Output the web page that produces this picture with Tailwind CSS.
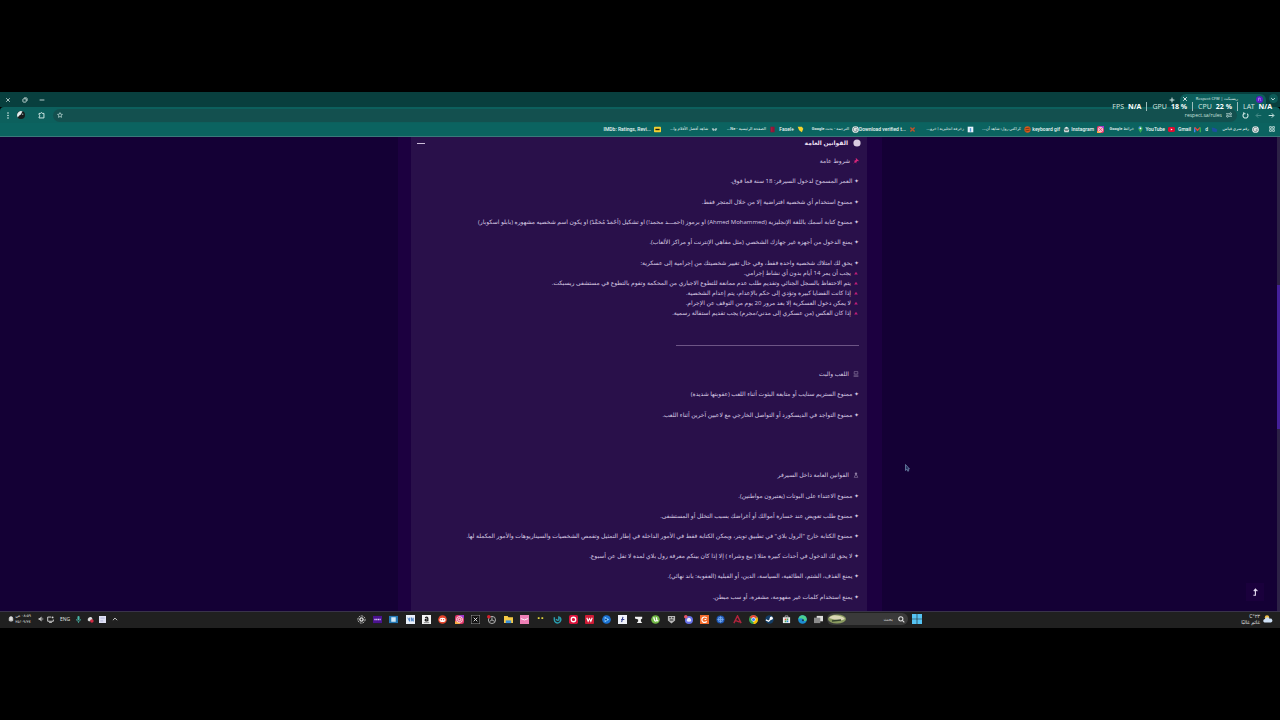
<!DOCTYPE html>
<html lang="ar" dir="rtl">
<head>
<meta charset="utf-8">
<title>ريسبكت | Respect CFW</title>
<script src="https://cdn.jsdelivr.net/npm/@tailwindcss/browser@4"></script>
</head>
<body class="bg-black min-h-screen font-['Open_Sans','DejaVu_Sans',sans-serif] text-white py-[92px] overflow-hidden">
<svg width="0" height="0" class="absolute" aria-hidden="true">
  <defs>
    <symbol id="x" viewBox="0 0 10 10"><path d="M2 2l6 6M8 2l-6 6" stroke="currentColor" stroke-width="1.4"/></symbol>
    <symbol id="arrow" viewBox="0 0 10 10"><path d="M1 5h7M5.500 2l3 3-3 3" stroke="currentColor" stroke-width="1.4" fill="none"/></symbol>
    <symbol id="globe" viewBox="0 0 10 10"><circle cx="5" cy="5" r="4.800" fill="#e4e8e8"/><path d="M7.500 3.500a3 3 0 1 0 .3 2H5.200" stroke="#6a8587" stroke-width="1.300" fill="none"/></symbol>
    <symbol id="insta" viewBox="0 0 10 10"><rect width="10" height="10" rx="2.500" fill="#e3386b"/><path d="M0 7.500V10h6C5 8 3 7 0 7z" fill="#f7a941"/><path d="M4 0h6v4C8 3 6 2 4 0z" fill="#a035c8"/><rect x="2" y="2" width="6" height="6" rx="2" fill="none" stroke="#fff"/><circle cx="5" cy="5" r="1.400" fill="none" stroke="#fff"/></symbol>
    <symbol id="tri" viewBox="0 0 10 10"><path d="M5 2l4.500 7h-9z" fill="#c01d78"/></symbol>
  </defs>
</svg>

<main class="relative flex flex-col">
  <header class="relative">
    <div class="flex h-[15px] items-end justify-between bg-[#083f3e]">
      <div class="flex h-full items-end">
        <button aria-label="البحث في علامات التبويب" class="flex h-[13px] w-[14px] items-start justify-center"><span class="flex size-[9px] items-center justify-center rounded-full bg-[#0d5b58]"><svg class="size-[6px]" viewBox="0 0 10 10"><path d="M2 3.500l3 3 3-3" stroke="#cfe8e6" stroke-width="1.600" fill="none"/></svg></span></button>
        <div class="flex h-[13px] items-center rounded-t-md bg-[#0c5f5c] ps-[3px] pe-[2px] pb-[3px]">
          <svg class="size-[7px]" viewBox="0 0 10 10"><circle cx="5" cy="5" r="5" fill="#5b1ec4"/><path d="M3.500 7V3h2.500v2l1 2" stroke="#bba0ff" fill="none"/></svg>
          <span class="ms-[18px] me-[2px] w-[48px] text-[4px] leading-[6px] whitespace-nowrap text-[#e2f2f0]">ريسبكت | Respect CFW</span>
          <button aria-label="إغلاق علامة التبويب" class="size-[6px]"><svg class="size-[6px]"><use href="#x"/></svg></button>
        </div>
        <button aria-label="علامة تبويب جديدة" class="flex h-[15px] w-[17px] items-center justify-center"><svg class="size-[6px]" viewBox="0 0 10 10"><path d="M5 1v8M1 5h8" stroke="#d9efed" stroke-width="1.600"/></svg></button>
      </div>
      <div class="flex h-full items-center gap-[11px] pe-[5px] text-[#c6dbd9]" dir="ltr">
        <button aria-label="إغلاق" class="ms-[5px] size-[6px]"><svg class="size-[6px]"><use href="#x"/></svg></button>
        <button aria-label="استعادة" class="size-[6px]"><svg class="size-[6px]" viewBox="0 0 10 10" fill="none" stroke="currentColor" stroke-width="1.500"><rect x="1.500" y="3" width="5.500" height="5.500" rx="1"/><path d="M3.500 1.500h4a1 1 0 0 1 1 1v4"/></svg></button>
        <button aria-label="تصغير" class="size-[6px]"><svg class="size-[6px]" viewBox="0 0 10 10"><path d="M1 5h8" stroke="currentColor" stroke-width="1.500"/></svg></button>
      </div>
    </div>

    <div class="flex h-[16px] items-center rounded-t bg-[#0c605d] ps-[5px] pe-[5px] text-[#d2e9e6]">
      <div class="flex items-center gap-[6px]">
        <button aria-label="رجوع" class="size-[7px]"><svg class="size-[7px]"><use href="#arrow"/></svg></button>
        <button aria-label="التالي" class="size-[7px] text-[#4c8d8a]"><svg class="size-[7px] rotate-180"><use href="#arrow"/></svg></button>
        <button aria-label="إعادة التحميل" class="size-[7px]"><svg class="size-[7px]" viewBox="0 0 10 10"><path d="M2.500 2.500v-2M2.500 2.500h2.500M2.500 2.500a3.600 3.600 0 1 0 5 0" stroke="currentColor" stroke-width="1.500" fill="none"/></svg></button>
      </div>
      <div class="ms-[5px] flex h-[13px] flex-1 items-center rounded-full bg-[#13504f] ps-[5px] pe-[4px]">
        <svg class="size-[6px]" viewBox="0 0 10 10" fill="none" stroke="currentColor" stroke-width="1.300"><path d="M0 3h5M5 7h5"/><circle cx="7.500" cy="3" r="1.600"/><circle cx="2.500" cy="7" r="1.600"/></svg>
        <input aria-label="شريط العنوان" dir="ltr" value="respect.sa/rules" class="mr-[4px] ml-auto w-[60px] bg-transparent text-right text-[5px] leading-[10px] text-[#c9e2df] outline-none">
        <svg class="size-[6px]" viewBox="0 0 10 10"><path d="M5 1l1.200 2.700 2.900.3-2.200 2 .6 2.900L5 7.400 2.500 8.900l.6-2.900L.9 4l2.900-.3z" stroke="currentColor" stroke-width="1.100" fill="none"/></svg>
      </div>
      <div class="ms-[8px] flex items-center gap-[13px]">
        <button aria-label="الإضافات" class="size-[7px]"><svg class="size-[7px]" viewBox="0 0 10 10"><path d="M1.500 2h2.200c.2-1.500 2.200-1.500 2.400 0h2.400v6.500h-7V6.800c1.500-.3 1.500-2.300 0-2.600z" stroke="currentColor" stroke-width="1.400" fill="none"/></svg></button>
        <div class="flex items-center gap-[6px]">
          <button aria-label="الملف الشخصي" class="size-[8px]"><svg class="size-[8px]" viewBox="0 0 10 10"><circle cx="5" cy="5" r="5" fill="#171c1d"/><path d="M0 5a5 5 0 0 1 7-4.500C5 2 6 4 4 5S2 7 1 8A5 5 0 0 1 0 5z" fill="#e2eeee"/><circle cx="7" cy="4" r="1" fill="#8da0a0"/></svg></button>
          <button aria-label="القائمة" class="h-[7px] w-[6px]"><svg class="h-[7px] w-[6px]" viewBox="0 0 6 7" fill="currentColor"><circle cx="3" cy="1" r=".8"/><circle cx="3" cy="3.500" r=".8"/><circle cx="3" cy="6" r=".8"/></svg></button>
        </div>
      </div>
    </div>

    <nav aria-label="شريط الإشارات" class="flex h-[14px] items-center border-b border-[#3a797b] bg-[#0b6360] ps-[5px] pb-px font-['Roboto','DejaVu_Sans',sans-serif] text-[5px] leading-[10px] font-medium whitespace-nowrap text-[#e8f6f4]">
      <svg class="me-[10px] size-[6px]" viewBox="0 0 10 10" fill="none" stroke="#b7d6d3" stroke-width="1.500"><path d="M1 1h3v3H1zM6 1h3v3H6zM1 6h3v3H1zM6 6h3v3H6z"/></svg>
      <a href="#" class="flex w-[41px] items-center gap-[3px]"><svg class="size-[7px] shrink-0"><use href="#globe"/></svg><span class="text-[4px]">رقم سري قياس</span></a>
      <a href="#" class="flex w-[17px] items-center gap-[3px]"><svg class="size-[7px] shrink-0" viewBox="0 0 10 10"><path d="M1 2l4 1 4 2-1 4-6-1z" fill="#1b4f9e"/></svg>d</a>
      <a href="#" class="flex w-[26px] items-center gap-[3px]"><svg class="size-[7px] shrink-0" viewBox="0 0 10 10"><path d="M1 9V2" stroke="#4285f4" stroke-width="2"/><path d="M1 2l4 4 4-4" stroke="#ea4335" stroke-width="2" fill="none"/><path d="M9 9V2" stroke="#34a853" stroke-width="2"/></svg>Gmail</a>
      <a href="#" class="flex w-[31px] items-center gap-[3px]"><svg class="size-[7px] shrink-0" viewBox="0 0 10 10"><rect y="1.500" width="10" height="7" rx="2" fill="#e00b30"/><path d="M4 3.500v3L6.700 5z" fill="#fff"/></svg>YouTube</a>
      <a href="#" class="flex w-[40px] items-center gap-[3px]"><svg class="size-[7px] shrink-0" viewBox="0 0 10 10"><path d="M5 10C4 7 2 6 2 3.500a3 3 0 0 1 6 0C8 6 6 7 5 10z" fill="#36a853"/><path d="M2 3.500A3 3 0 0 1 5 .5v3z" fill="#4285f4"/><circle cx="5" cy="3.500" r="1.200" fill="#fff"/></svg><span class="text-[4px]">خرائط Google</span></a>
      <a href="#" class="flex w-[34px] items-center gap-[3px]"><svg class="size-[7px] shrink-0"><use href="#insta"/></svg>Instagram</a>
      <a href="#" class="flex w-[39px] items-center gap-[3px]"><svg class="size-[7px] shrink-0" viewBox="0 0 10 10"><path d="M2 3l3-2 3 2v1H2z" fill="#eee"/><path d="M1 5h8l-1 4H2z" fill="#cfd8d8"/><path d="M3 6h4" stroke="#403a3a"/></svg>keyboard gif</a>
      <a href="#" class="flex w-[57px] items-center gap-[3px]"><svg class="size-[7px] shrink-0" viewBox="0 0 10 10"><circle cx="5" cy="5" r="4.500" fill="#d65a1c"/><path d="M2 4l6-1M2 7l6-1" stroke="#5b2b12"/></svg><span class="text-[4px]">كراكتي رول: شاهد أن...</span></a>
      <a href="#" class="flex w-[58px] items-center gap-[3px]"><svg class="size-[7px] shrink-0" viewBox="0 0 10 10"><rect x="1" y="1" width="8" height="8" fill="#e6f1fa"/><path d="M4 3h2v5H4z" fill="#4a9ad8"/></svg><span class="text-[4px]">زخرفة انجليزية | خرو...</span></a>
      <a href="#" class="flex w-[57px] items-center gap-[3px]"><svg class="size-[7px] shrink-0" viewBox="0 0 10 10"><path d="M2 2l6 6M8 2L2 8" stroke="#c0522a" stroke-width="2"/></svg><span dir="ltr">Download verified t...</span></a>
      <a href="#" class="flex w-[55px] items-center gap-[3px]"><svg class="size-[7px] shrink-0"><use href="#globe"/></svg><span class="text-[4px]">الترجمة - بحث Google</span></a>
      <a href="#" class="flex w-[28px] items-center gap-[3px]"><svg class="size-[7px] shrink-0" viewBox="0 0 10 10"><path d="M1 1h6l2 3-2 5-4-3z" fill="#f4d32c"/></svg><span dir="ltr">Fasel+</span></a>
      <a href="#" class="flex w-[58px] items-center gap-[3px]"><svg class="size-[7px] shrink-0" viewBox="0 0 10 10"><rect x="2" y="1" width="6" height="8" fill="#8e1638"/><path d="M4 2v6" stroke="#c22249"/></svg><span class="text-[4px]">الصفحة الرئيسية - Ne...</span></a>
      <a href="#" class="flex w-[57px] items-center gap-[3px]"><svg class="size-[7px] shrink-0" viewBox="0 0 10 10"><path d="M1 4l2-1 2 2 2-2 2 1-2 3-2-1-2 1z" fill="#a9c4c4"/></svg><span class="text-[4px]">شاهد أفضل الأفلام وا...</span></a>
      <a href="#" class="flex w-[57px] items-center gap-[3px]"><svg class="size-[7px] shrink-0" viewBox="0 0 10 10"><rect y="1" width="10" height="8" rx="1" fill="#f2cf33"/><path d="M2 5h6" stroke="#221c08" stroke-width="2"/></svg><span dir="ltr">IMDb: Ratings, Revi...</span></a>
    </nav>

    <div dir="ltr" class="absolute top-[10px] right-[8px] flex items-center gap-[5px] font-['Noto_Sans'] text-[7px] leading-[8px] text-[#cfe0df] whitespace-nowrap">
      <span class="flex gap-[4px]">FPS <b class="text-white">N/A</b></span><i class="h-[9px] w-px bg-[#9dbdbb]"></i>
      <span class="flex gap-[4px]">GPU <b class="text-white">18 %</b></span><i class="h-[9px] w-px bg-[#9dbdbb]"></i>
      <span class="flex gap-[4px]">CPU <b class="text-white">22 %</b></span><i class="h-[9px] w-px bg-[#9dbdbb]"></i>
      <span class="flex gap-[4px]">LAT <b class="text-white">N/A</b></span>
    </div>
  </header>

  <section class="relative flex h-[474px] justify-center overflow-hidden bg-[#140035]">
    <div class="w-[484px] bg-[#1c0040] ps-[15px] pe-[13px]">
      <article class="h-full bg-[#29104a] ps-[8px] pe-[6px] pt-[1px] text-[6px] leading-[10px] whitespace-nowrap text-[#d8cbe3]">
        <button class="flex h-[10px] w-full items-center text-[#e9dff0]">
          <svg class="ms-[-2px] size-[8px]" viewBox="0 0 10 10"><circle cx="5" cy="5" r="4.500" fill="#d9cce0"/></svg>
          <span class="ms-[5px] me-auto font-bold">القوانين العامة</span>
          <span class="h-px w-[8px] bg-[#cbbcd8]"></span>
        </button>
        <h2 class="mt-[8px] mb-[10px] flex items-center gap-[3px]"><svg class="size-[6px]" viewBox="0 0 10 10"><path d="M5 0l5 5-1 .5L7 5 5.500 7v2L3.500 7 0 10l3-3.700L1 4.500h2L5 3 4.500 1z" fill="#d8267a"/></svg>شروط عامة</h2>
        <p class="mb-[11px]">✦ العمر المسموح لدخول السيرفر: 18 سنة فما فوق.</p>
        <p class="mb-[10px]">✦ ممنوع استخدام أي شخصية افتراضية إلا من خلال المتجر فقط.</p>
        <p class="mb-[10px]">✦ ممنوع كتابة أسمك باللغة الإنجليزية (Ahmed Mohammed) او برموز (احمـــد محمد!) او تشكيل (أحْمَدْ مُحَمَّدْ) او يكون اسم شخصيه مشهوره (بابلو اسكوبار)</p>
        <p class="mb-[11px]">✦ يمنع الدخول من أجهزة غير جهازك الشخصي (مثل مقاهي الإنترنت أو مراكز الألعاب).</p>
        <p>✦ يحق لك امتلاك شخصية واحدة فقط، وفي حال تغيير شخصيتك من إجرامية إلى عسكرية:</p>
        <ul>
          <li class="flex items-center gap-[3px]"><svg class="ms-[1px] size-[4px]"><use href="#tri"/></svg>يجب أن يمر 14 أيام بدون أي نشاط إجرامي.</li>
          <li class="flex items-center gap-[3px]"><svg class="ms-[1px] size-[4px]"><use href="#tri"/></svg>يتم الاحتفاظ بالسجل الجنائي وتقديم طلب عدم ممانعة للتطوع الاجباري من المحكمة وتقوم بالتطوع في مستشفى ريسبكت.</li>
          <li class="flex items-center gap-[3px]"><svg class="ms-[1px] size-[4px]"><use href="#tri"/></svg>إذا كانت القضايا كبيرة وتؤدي إلى حكم بالإعدام، يتم إعدام الشخصية.</li>
          <li class="flex items-center gap-[3px]"><svg class="ms-[1px] size-[4px]"><use href="#tri"/></svg>لا يمكن دخول العسكرية إلا بعد مرور 20 يوم من التوقف عن الإجرام.</li>
          <li class="flex items-center gap-[3px]"><svg class="ms-[1px] size-[4px]"><use href="#tri"/></svg>إذا كان العكس (من عسكري إلى مدني/مجرم) يجب تقديم استقالة رسمية.</li>
        </ul>
        <hr class="mt-[27px] mb-[23px] w-[183px] border-[#6d5586]">
        <h2 class="mb-[10px] flex items-center gap-[4px]"><svg class="size-[6px]" viewBox="0 0 10 10"><path d="M2 1h6v4H2zM1 7h8M1 9h8" stroke="#8f7da3" fill="none"/></svg>اللعب والبث</h2>
        <p class="mb-[11px]">✦ ممنوع الستريم سنايب أو متابعة البثوث أثناء اللعب (عقوبتها شديدة)</p>
        <p class="mb-[50px]">✦ ممنوع التواجد في الديسكورد أو التواصل الخارجي مع لاعبين آخرين أثناء اللعب.</p>
        <h2 class="mb-[11px] flex items-center gap-[4px]"><svg class="size-[6px]" viewBox="0 0 10 10"><circle cx="5" cy="3" r="2" fill="#8f7da3"/><path d="M2 9l1-3h4l1 3z" stroke="#8f7da3" fill="none"/></svg>القوانين العامة داخل السيرفر</h2>
        <p class="mb-[10px]">✦ ممنوع الاعتداء على البوتات (يعتبرون مواطنين).</p>
        <p class="mb-[10px]">✦ ممنوع طلب تعويض عند خسارة أموالك أو أغراضك بسبب التخلل أو المستشفى.</p>
        <p class="mb-[10px]">✦ ممنوع الكتابة خارج "الرول بلاي" في تطبيق تويتر، ويمكن الكتابة فقط في الأمور الداخلة في إطار التمثيل وتقمص الشخصيات والسيناريوهات والأمور المكملة لها.</p>
        <p class="mb-[10px]">✦ لا يحق لك الدخول في أحداث كبيرة مثلا ( بيع وشراء ) إلا إذا كان بينكم معرفة رول بلاي لمدة لا تقل عن أسبوع.</p>
        <p class="mb-[11px]">✦ يمنع القذف، الشتم، الطائفية، السياسة، الدين، أو القبلية (العقوبة: باند نهائي).</p>
        <p>✦ يمنع استخدام كلمات غير مفهومة، مشفرة، أو سب مبطن.</p>
      </article>
    </div>
    <div class="absolute inset-y-0 right-0 w-[3px] bg-[#2c2145]"><div class="mt-[148px] h-[144px] bg-[#44209a]"></div></div>
    <button aria-label="العودة إلى الأعلى" class="absolute right-[16px] bottom-[10px] flex size-[18px] items-center justify-center bg-[#1a003c]"><svg class="size-[8px]" viewBox="0 0 10 10"><path d="M3 9h2.500V2M3.500 4l2-2.500L8 4" stroke="#e4dcf0" stroke-width="1.400" fill="none"/></svg></button>
    <svg class="absolute top-[327px] left-[905px] h-[8px] w-[5px]" viewBox="0 0 5 8"><path d="M.5.5v6l1.300-1.200 1 2 1-.5-.9-1.800h1.600z" fill="#26305f" stroke="#7a93b5" stroke-width=".7"/></svg>
  </section>

  <footer class="flex h-[17px] items-center border-t border-[#39334a] bg-[#202020] pb-[2px]">
    <div class="flex flex-1 items-center gap-[3px] ps-[7px] pe-[6px] text-[5px] leading-[6px] whitespace-nowrap text-[#e2e2e2]">
      <svg class="h-[8px] w-[10px]" viewBox="0 0 10 8"><circle cx="4" cy="2.500" r="2.200" fill="#f2c14b"/><path d="M1.500 7.500a1.800 1.800 0 0 1 .5-3.500 2.500 2.500 0 0 1 4.700-.3A2 2 0 0 1 8 7.500z" fill="#cfe0f5"/></svg>
      <div><div>٢٣°C</div><div>غائم غالبًا</div></div>
    </div>
    <button aria-label="ابدأ" class="me-[4px] flex h-[14px] w-[10px] items-center justify-center"><svg class="size-[10px]" viewBox="0 0 10 10" fill="#55c3f4"><path d="M0 0h4.700v4.700H0zM5.300 0H10v4.700H5.300zM0 5.300h4.700V10H0zM5.300 5.300H10V10H5.300z"/></svg></button>
    <label class="flex h-[12px] w-[81px] items-center rounded-full bg-[#3a3a3a] ps-[3px] pe-[1px]">
      <svg class="size-[7px]" viewBox="0 0 10 10" fill="none" stroke="#dedede" stroke-width="1.500"><circle cx="4" cy="4" r="3"/><path d="M6.200 6.200L9 9"/></svg>
      <input aria-label="بحث" placeholder="بحث" class="ms-[5px] w-0 flex-1 bg-transparent text-[5px] leading-[10px] outline-none placeholder:text-[#c4c4c4]">
      <svg class="h-[10px] w-[18px]" viewBox="0 0 18 10"><ellipse cx="9" cy="5" rx="9" ry="4.500" fill="#8a9a60"/><path d="M1 4c3-4 8-3 14-1l2 2c-5 3-11 0-16-1z" fill="#d9d6b4"/><path d="M4 7l9-1" stroke="#36452d" stroke-width="1.500"/></svg>
    </label>
    <div dir="ltr" class="flex w-[474px] justify-around *:size-[9px] *:shrink-0">
      <svg viewBox="0 0 10 10"><circle cx="5" cy="5" r="4" fill="none" stroke="#ddd" stroke-dasharray="2 1"/><circle cx="5" cy="5" r="2.500" fill="#ddd"/><circle cx="5" cy="5" r="1" fill="#222"/></svg>
      <svg viewBox="0 0 10 10"><rect y="1" width="10" height="8" fill="#4b128f"/><path d="M1.500 5h7" stroke="#d9c4ff" stroke-width="1.500" stroke-dasharray="1.500 .5"/></svg>
      <svg viewBox="0 0 10 10"><rect y="1" width="10" height="8" fill="#2478b5"/><path d="M2.500 2.500h5v5h-5z" fill="#cfe9f7"/></svg>
      <svg viewBox="0 0 10 10"><rect width="10" height="10" fill="#e9f0fa"/><path d="M2 3l2 4V3M6 7V3l2 4V3" stroke="#437bc2" fill="none"/></svg>
      <svg viewBox="0 0 10 10"><rect width="10" height="10" fill="#f4f4f4"/><path d="M3.500 3Q6.500 1.500 6.500 4v3M6.500 4.500c-4-.5-4 3.500 0 1.500" stroke="#111" stroke-width="1.300" fill="none"/><path d="M2 8.500h6" stroke="#333" stroke-width=".6"/></svg>
      <svg viewBox="0 0 10 10"><circle cx="5" cy="5" r="4.800" fill="#e8442a"/><ellipse cx="5" cy="5.500" rx="3.400" ry="2.400" fill="#fff"/><circle cx="3.700" cy="5.200" r=".7" fill="#e8442a"/><circle cx="6.300" cy="5.200" r=".7" fill="#e8442a"/></svg>
      <svg><use href="#insta"/></svg>
      <svg viewBox="0 0 10 10"><rect width="10" height="10" fill="#111" stroke="#aaa"/><path d="M3 3l4 4M7 3L3 7" stroke="#eee"/></svg>
      <svg viewBox="0 0 10 10"><circle cx="5.500" cy="5.500" r="4" fill="#222" stroke="#bbb"/><path d="M5.500 5.500V2.500M5.500 5.500l3 1.500M5.500 5.500L3 7" stroke="#bbb"/><circle cx="2" cy="2" r="2" fill="#d3202c"/></svg>
      <svg viewBox="0 0 10 10"><path d="M0 1h4l1 1.500h5V9H0z" fill="#f6c945"/><path d="M2 6h6v3H2z" fill="#3b8fd8"/></svg>
      <svg viewBox="0 0 10 10"><rect width="10" height="10" fill="#ee7fb5"/><path d="M1 4q4 3 8 0" stroke="#fff" fill="none"/></svg>
      <svg viewBox="0 0 10 10"><path d="M2 2.500h2v2H2zM6 2.500h2v2H6z" fill="#e3d43e"/></svg>
      <svg viewBox="0 0 10 10"><path d="M1.500 2.500v2.500a3.600 3.600 0 1 0 6-2.500M3.500 4.500a2 2 0 0 0 3 1V1.500" stroke="#2a9daf" stroke-width="1.600" fill="none"/></svg>
      <svg viewBox="0 0 10 10"><rect width="10" height="10" rx="2" fill="#d9123b"/><circle cx="5" cy="5" r="2.500" fill="none" stroke="#fff" stroke-width="1.400"/></svg>
      <svg viewBox="0 0 10 10"><rect width="10" height="10" rx="1" fill="#cf1b35"/><path d="M2 3l1.500 4L5 4l1.500 3L8 3" stroke="#fff" stroke-width="1.200" fill="none"/></svg>
      <svg viewBox="0 0 10 10"><circle cx="5" cy="5" r="4.800" fill="#1b72d4"/><path d="M3 2l5 3-5 3z" fill="#8fd3ff"/><circle cx="4.500" cy="5" r="1.200" fill="#124a9b"/></svg>
      <svg viewBox="0 0 10 10"><rect width="10" height="10" fill="#f0f2fa"/><path d="M5.500 2L4 8M3.500 5h3.500" stroke="#333c8c" stroke-width="1.200"/></svg>
      <svg viewBox="0 0 10 10"><path d="M0 2h8v2L6.500 5v2L8 9H2l1.500-2V5L0 4z" fill="#f2f2f2"/></svg>
      <svg viewBox="0 0 10 10"><circle cx="5" cy="5" r="4.800" fill="#71b845"/><path d="M3 2.500l1 3.500q1 1.500 2.500 0L6 2.500M7 6l1 1" stroke="#fff" stroke-width="1.400" fill="none"/></svg>
      <svg viewBox="0 0 10 10"><path d="M1 1h8v5L5 9.500 1 6z" fill="#b8b8b8"/><path d="M2.500 3h2M5.500 3h2M3 5.500h4" stroke="#222" stroke-width="1.200"/></svg>
      <svg viewBox="0 0 10 10"><circle cx="5.500" cy="5.500" r="4.500" fill="#6570e8"/><path d="M3 7q0-4 2.500-4T8 7q-2.500 1-5 0" fill="#e8eaff"/><circle cx="2" cy="2" r="2" fill="#e4576b"/></svg>
      <svg viewBox="0 0 10 10"><rect width="10" height="10" fill="#f1692a"/><path d="M7.500 3.500A3 3 0 1 0 7.500 7M5 5h2" stroke="#fff" stroke-width="1.300" fill="none"/></svg>
      <svg viewBox="0 0 10 10"><circle cx="5" cy="5" r="4.500" fill="#1d55b4"/><path d="M3 3h4v4H3zM5 1.500v7M1.500 5h7" stroke="#75a9ec" fill="none"/></svg>
      <svg viewBox="0 0 10 10"><path d="M1 9l4-8 4 8M2.500 6l5 2" stroke="#b3243d" stroke-width="1.600" fill="none"/></svg>
      <svg viewBox="0 0 10 10"><circle cx="5" cy="5" r="5" fill="#34a853"/><path d="M5 5L.7 2.500A5 5 0 0 1 9.300 2.500z" fill="#ea4335"/><path d="M5 5l4.300-2.500A5 5 0 0 1 5 10z" fill="#fbbc05"/><circle cx="5" cy="5" r="2.400" fill="#fff"/><circle cx="5" cy="5" r="1.800" fill="#4285f4"/></svg>
      <svg viewBox="0 0 10 10"><circle cx="5" cy="5" r="4.700" fill="#123d66"/><path d="M1 5.500l3 1.500 3-3" stroke="#fff" stroke-width="1.500" fill="none"/><circle cx="7" cy="3.500" r="1.700" fill="#fff"/></svg>
      <svg viewBox="0 0 10 10"><path d="M1 2.500h8V9H1z" fill="#eee"/><path d="M3.500 2.500V1h3v1.500" stroke="#aaa" fill="none"/><path d="M3 4h1.800v1.800H3z" fill="#e5533d"/><path d="M5.200 4H7v1.800H5.200zM3 6.200h1.800V8H3z" fill="#4aa957"/><path d="M5.200 6.200H7V8H5.200z" fill="#2c8fe0"/></svg>
      <svg viewBox="0 0 10 10"><circle cx="5" cy="5" r="4.800" fill="#1c8ed4"/><path d="M.5 4.500A4.600 4.600 0 0 1 9.700 5c0 2-3 2-3.500 1C6 3.500 3 3 .5 4.500z" fill="#4cd08f"/><circle cx="5.500" cy="5.800" r="1.200" fill="#1b3557"/></svg>
      <svg viewBox="0 0 10 10"><rect x="3" y="1" width="7" height="6" fill="#ddd"/><rect y="3" width="7" height="6" fill="#8b8b8b"/></svg>
    </div>
    <div dir="ltr" class="flex flex-1 items-center ps-[8px] text-[5px] leading-[6px] whitespace-nowrap text-[#e2e2e2]">
      <svg class="size-[6px]" viewBox="0 0 10 10"><path d="M2 8V4a3 3 0 0 1 6 0v4zM4 9.500h2" fill="#ddd" stroke="#ddd"/></svg>
      <div class="ms-[2px] w-[17px] text-[4px]" dir="rtl"><div>٠٨:٥٩ ص</div><div>٢٥/٠٩/٢٤</div></div>
      <svg class="ms-[5px] size-[6px]" viewBox="0 0 10 10"><path d="M1 3.500h2L6 1v8L3 6.500H1z" fill="#bbb"/><path d="M7.500 3q1.500 2 0 4" stroke="#bbb" fill="none"/></svg>
      <svg class="ms-[3px] size-[7px]" viewBox="0 0 10 10"><path d="M6 1.500H1v6h8V5M3 9.500h4" stroke="#ddd" stroke-width="1.300" fill="none"/><circle cx="8" cy="2" r="1.300" fill="#ddd"/></svg>
      <span class="ms-[6px] w-[11px]">ENG</span>
      <svg class="ms-[4px] size-[7px]" viewBox="0 0 10 10"><rect x="3.500" width="3" height="6" rx="1.500" fill="#48b7aa"/><path d="M2 4.500a3 3 0 0 0 6 0M5 7.500V10" stroke="#48b7aa" fill="none"/></svg>
      <svg class="ms-[5px] size-[7px]" viewBox="0 0 10 10"><path d="M1 6a4 4 0 0 1 6-4l1 3-5 3z" fill="#ddd"/><circle cx="7" cy="7" r="2.500" fill="#d42a43"/></svg>
      <svg class="ms-[5px] size-[7px]" viewBox="0 0 10 10"><rect width="10" height="10" fill="#dfe0f4"/><path d="M2 3h6M2 7h4" stroke="#9ca0cc"/></svg>
      <svg class="ms-[6px] size-[6px]" viewBox="0 0 10 10"><path d="M1.500 7L5 3.500 8.500 7" stroke="#ddd" stroke-width="1.500" fill="none"/></svg>
    </div>
  </footer>
</main>
</body>
</html>
